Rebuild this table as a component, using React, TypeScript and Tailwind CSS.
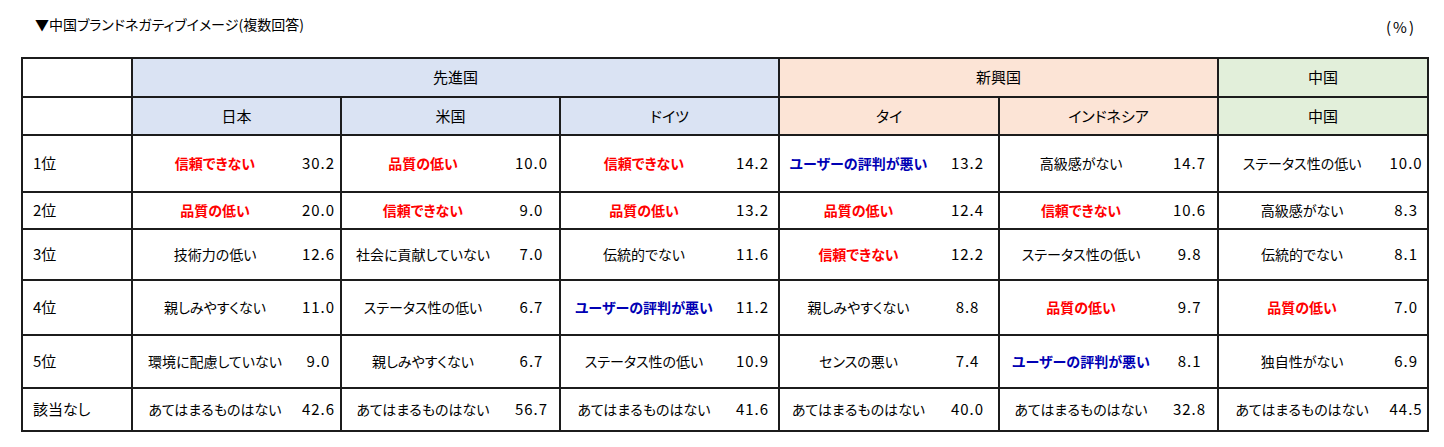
import type { ReactNode } from 'react'

type Tone = 'plain' | 'red' | 'blue'
type Entry = [string, string, Tone?]

const ranks = ['1位', '2位', '3位', '4位', '5位', '該当なし']
const rowHeights = ['h-[57px]', 'h-[37px]', 'h-[51px]', 'h-[55px]', 'h-[53px]', 'h-[43px]']

const countries: { name: string; cols: [string, string]; bg: string; items: Entry[] }[] = [
  {
    name: '日本',
    cols: ['w-[165px]', 'w-[44px]'],
    bg: 'bg-[#dae3f3]',
    items: [
      ['信頼できない', '30.2', 'red'],
      ['品質の低い', '20.0', 'red'],
      ['技術力の低い', '12.6'],
      ['親しみやすくない', '11.0'],
      ['環境に配慮していない', '9.0'],
      ['あてはまるものはない', '42.6'],
    ],
  },
  {
    name: '米国',
    cols: ['w-[163px]', 'w-[56px]'],
    bg: 'bg-[#dae3f3]',
    items: [
      ['品質の低い', '10.0', 'red'],
      ['信頼できない', '9.0', 'red'],
      ['社会に貢献していない', '7.0'],
      ['ステータス性の低い', '6.7'],
      ['親しみやすくない', '6.7'],
      ['あてはまるものはない', '56.7'],
    ],
  },
  {
    name: 'ドイツ',
    cols: ['w-[167px]', 'w-[52px]'],
    bg: 'bg-[#dae3f3]',
    items: [
      ['信頼できない', '14.2', 'red'],
      ['品質の低い', '13.2', 'red'],
      ['伝統的でない', '11.6'],
      ['ユーザーの評判が悪い', '11.2', 'blue'],
      ['ステータス性の低い', '10.9'],
      ['あてはまるものはない', '41.6'],
    ],
  },
  {
    name: 'タイ',
    cols: ['w-[158px]', 'w-[62px]'],
    bg: 'bg-[#fce4d6]',
    items: [
      ['ユーザーの評判が悪い', '13.2', 'blue'],
      ['品質の低い', '12.4', 'red'],
      ['信頼できない', '12.2', 'red'],
      ['親しみやすくない', '8.8'],
      ['センスの悪い', '7.4'],
      ['あてはまるものはない', '40.0'],
    ],
  },
  {
    name: 'インドネシア',
    cols: ['w-[163px]', 'w-[56px]'],
    bg: 'bg-[#fce4d6]',
    items: [
      ['高級感がない', '14.7'],
      ['信頼できない', '10.6', 'red'],
      ['ステータス性の低い', '9.8'],
      ['品質の低い', '9.7', 'red'],
      ['ユーザーの評判が悪い', '8.1', 'blue'],
      ['あてはまるものはない', '32.8'],
    ],
  },
  {
    name: '中国',
    cols: ['w-[167px]', 'w-[43px]'],
    bg: 'bg-[#e2efda]',
    items: [
      ['ステータス性の低い', '10.0'],
      ['高級感がない', '8.3'],
      ['伝統的でない', '8.1'],
      ['品質の低い', '7.0', 'red'],
      ['独自性がない', '6.9'],
      ['あてはまるものはない', '44.5'],
    ],
  },
]

const groups = [
  { label: '先進国', span: 6, bg: 'bg-[#dae3f3]' },
  { label: '新興国', span: 4, bg: 'bg-[#fce4d6]' },
  { label: '中国', span: 2, bg: 'bg-[#e2efda]' },
]

const jp = "font-['Noto_Sans_CJK_JP',sans-serif] [font-feature-settings:'palt']"
const num = "[font-feature-settings:normal] text-[15px] tracking-[1px]"

function Label({ text, tone = 'plain' }: { text: string; tone?: Tone }) {
  if (tone === 'red') return <span className="font-bold text-[#ff0000]">{text}</span>
  if (tone === 'blue') return <span className="font-bold text-[#0000b4]">{text}</span>
  return <span>{text}</span>
}

function Cell({ children, className = '' }: { children: ReactNode; className?: string }) {
  return <td className={`border-2 border-[#1c1c1c] ${className}`}>{children}</td>
}

export default function App() {
  return (
    <div className={`w-[1444px] h-[447px] bg-white text-black ${jp}`}>
      <div className="flex justify-between pt-[14px] pl-[35px] pr-[28px]">
        <div className="text-[14px] leading-[20px]">▼中国ブランドネガティブイメージ(複数回答)</div>
        <div className="mt-[3px] text-[15px] leading-[20px] tracking-[2px]">(%)</div>
      </div>

      <table className="ml-[21px] mt-[20px] w-[1408px] table-fixed border-collapse text-[14px]">
        <colgroup>
          <col className="w-[110px]" />
          {countries.map((c) => [
            <col key={c.name + 'a'} className={c.cols[0]} />,
            <col key={c.name + 'b'} className={c.cols[1]} />,
          ])}
        </colgroup>
        <thead className="text-[15px]">
          <tr className="h-[39px]">
            <Cell className="bg-white">{''}</Cell>
            {groups.map((g) => (
              <td key={g.label} colSpan={g.span} className={`border-2 border-[#1c1c1c] text-center font-normal ${g.bg}`}>
                {g.label}
              </td>
            ))}
          </tr>
          <tr className="h-[38px]">
            <td className="border-2 border-[#1c1c1c] border-t-0 bg-white" />
            {countries.map((c) => (
              <td key={c.name} colSpan={2} className={`border-2 border-[#1c1c1c] text-center ${c.bg}`}>
                {c.name}
              </td>
            ))}
          </tr>
        </thead>
        <tbody>
          {ranks.map((rank, i) => (
            <tr key={rank} className={rowHeights[i]}>
              <td className="border-2 border-[#1c1c1c] pl-[10px] text-[15px]">{rank}</td>
              {countries.map((c) => {
                const [text, value, tone] = c.items[i]
                return [
                  <td key={c.name + 't'} className="border-2 border-r-0 border-[#1c1c1c] text-center whitespace-nowrap">
                    <Label text={text} tone={tone} />
                  </td>,
                  <td key={c.name + 'n'} className={`border-2 border-l-0 border-[#1c1c1c] text-center ${num}`}>
                    {value}
                  </td>,
                ]
              })}
            </tr>
          ))}
        </tbody>
      </table>
    </div>
  )
}
